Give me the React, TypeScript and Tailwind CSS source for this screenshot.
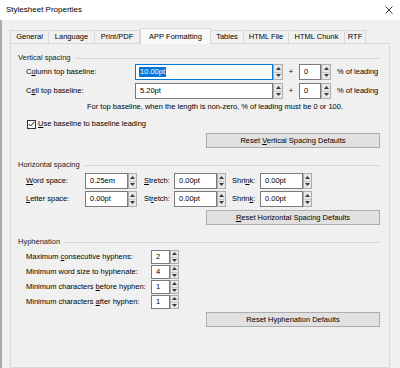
import React from "react";

function Spin({ w = 10 }: { w?: number }) {
  return (
    <div
      className="flex flex-col self-stretch border border-[#adadad] bg-[#e8e8e8]"
      style={{ width: w }}
    >
      <div className="flex flex-1 items-center justify-center border-b border-[#c8c8c8]">
        <svg width="5" height="3" viewBox="0 0 5 3">
          <path d="M0 3 L2.5 0 L5 3 Z" fill="#3a3a3a" />
        </svg>
      </div>
      <div className="flex flex-1 items-center justify-center">
        <svg width="5" height="3" viewBox="0 0 5 3">
          <path d="M0 0 L5 0 L2.5 3 Z" fill="#3a3a3a" />
        </svg>
      </div>
    </div>
  );
}

function Field({
  w,
  children,
  focused = false,
}: {
  w: number;
  children: React.ReactNode;
  focused?: boolean;
}) {
  return (
    <div
      className={
        focused
          ? "flex items-center self-stretch border border-[#0078d7] bg-white pl-[3px]"
          : "flex items-center self-stretch border border-[#7a7a7a] bg-white pl-[4px]"
      }
      style={{ width: w }}
    >
      {children}
    </div>
  );
}

function U({ children }: { children: React.ReactNode }) {
  return <span className="underline underline-offset-1">{children}</span>;
}

function GroupHeader({ label, className }: { label: string; className: string }) {
  return (
    <div className={"flex h-[10px] items-center " + className}>
      <span className="text-[#1a1a1a]">{label}</span>
      <div className="ml-[4px] h-px flex-1 bg-[#d8d8d8]" />
    </div>
  );
}

function Btn({ children, className }: { children: React.ReactNode; className: string }) {
  return (
    <div
      className={
        "flex h-[15px] w-[174px] items-center justify-center self-end border border-[#adadad] bg-[#e1e1e1] " +
        className
      }
    >
      {children}
    </div>
  );
}

const tabs = [
  { t: "General", w: 39 },
  { t: "Language", w: 47 },
  { t: "Print/PDF", w: 46 },
  { t: "APP Formatting", w: 71, sel: true },
  { t: "Tables", w: 34 },
  { t: "HTML File", w: 46 },
  { t: "HTML Chunk", w: 57 },
  { t: "RTF", w: 22 },
];

export default function App() {
  return (
    <div className="h-[368px] w-[400px] overflow-hidden bg-[#f0f0f0] font-['Liberation_Sans',Arial,sans-serif] text-[7.5px] leading-[10px] text-black">
      {/* title bar */}
      <div className="flex h-[20px] items-center justify-between bg-white pl-[6px] pr-[7px]">
        <span className="text-[8px]">Stylesheet Properties</span>
        <svg width="8" height="8" viewBox="0 0 8 8">
          <path d="M0.5 0.5 L7.5 7.5 M7.5 0.5 L0.5 7.5" stroke="#222" strokeWidth="0.9" />
        </svg>
      </div>

      <div className="flex h-[348px] flex-col border-l-[2px] border-[#ababab] pl-[8px] pt-[8px]">
        {/* tabs */}
        <div className="flex h-[15px] items-end">
          {tabs.map((tab) =>
            tab.sel ? (
              <div
                key={tab.t}
                className="relative z-10 -mb-px flex h-[16px] items-center justify-center border border-b-0 border-[#d9d9d9] bg-[#f9f9f9]"
                style={{ width: tab.w }}
              >
                {tab.t}
              </div>
            ) : (
              <div
                key={tab.t}
                className="flex h-[13px] items-center justify-center border border-b-0 border-[#d9d9d9] bg-[#f0f0f0] -ml-px first:ml-0"
                style={{ width: tab.w }}
              >
                {tab.t}
              </div>
            )
          )}
        </div>

        {/* panel */}
        <div className="flex w-[380px] flex-1 flex-col border border-[#d9d9d9] pl-[7px] pr-[9px]">
          {/* Vertical spacing */}
          <GroupHeader label="Vertical spacing" className="mt-[9px]" />
          <div className="mt-[1px] flex h-[16px] items-center pl-[8px]">
            <div className="w-[109px]">
              C<U>o</U>lumn top baseline:
            </div>
            <Field w={138} focused>
              <span className="bg-[#0078d7] px-[1px] leading-[10px] text-white">10.00pt</span>
            </Field>
            <Spin />
            <div className="w-[16px] text-center">+</div>
            <Field w={22}>0</Field>
            <Spin />
            <div className="ml-[6px]">% of leading</div>
          </div>
          <div className="mt-[3px] flex h-[16px] items-center pl-[8px]">
            <div className="w-[109px]">
              C<U>e</U>ll top baseline:
            </div>
            <Field w={138}>5.20pt</Field>
            <Spin />
            <div className="w-[16px] text-center">+</div>
            <Field w={22}>0</Field>
            <Spin />
            <div className="ml-[6px]">% of leading</div>
          </div>
          <div className="ml-[69px] mt-[3px] h-[10px]">
            For top baseline, when the length is non-zero, % of leading must be 0 or 100.
          </div>
          <div className="mt-[7px] flex h-[10px] items-center pl-[9px]">
            <div className="flex h-[9px] w-[9px] items-center justify-center border border-[#333] bg-white">
              <svg width="7" height="6" viewBox="0 0 7 6">
                <path d="M0.6 3 L2.6 5 L6.4 0.8" stroke="#111" strokeWidth="1" fill="none" />
              </svg>
            </div>
            <span className="ml-[2px]">
              <U>U</U>se baseline to baseline leading
            </span>
          </div>
          <Btn className="mt-[4px]">
            <span>
              Reset <U>V</U>ertical Spacing Defaults
            </span>
          </Btn>

          {/* Horizontal spacing */}
          <GroupHeader label="Horizontal spacing" className="mt-[12px]" />
          <div className="mt-[3px] flex h-[16px] items-center pl-[8px]">
            <div className="w-[59px]">
              <U>W</U>ord space:
            </div>
            <Field w={43}>0.25em</Field>
            <Spin w={9} />
            <div className="ml-[7px] w-[30px]">
              <U>S</U>tretch:
            </div>
            <Field w={43}>0.00pt</Field>
            <Spin w={9} />
            <div className="ml-[6px] w-[28px]">
              Shri<U>n</U>k:
            </div>
            <Field w={43}>0.00pt</Field>
            <Spin w={9} />
          </div>
          <div className="mt-[2px] flex h-[16px] items-center pl-[8px]">
            <div className="w-[59px]">
              <U>L</U>etter space:
            </div>
            <Field w={43}>0.00pt</Field>
            <Spin w={9} />
            <div className="ml-[7px] w-[30px]">
              St<U>r</U>etch:
            </div>
            <Field w={43}>0.00pt</Field>
            <Spin w={9} />
            <div className="ml-[6px] w-[28px]">
              Shrin<U>k</U>:
            </div>
            <Field w={43}>0.00pt</Field>
            <Spin w={9} />
          </div>
          <Btn className="mt-[3px]">
            <span>
              <U>R</U>eset Horizontal Spacing Defaults
            </span>
          </Btn>

          {/* Hyphenation */}
          <GroupHeader label="Hyphenation" className="mt-[12px]" />
          {[
            { l: <>Maximum <U>c</U>onsecutive hyphens:</>, v: "2" },
            { l: <>Minimum word size to hyphenate:</>, v: "4" },
            { l: <>Minimum characters <U>b</U>efore hyphen:</>, v: "1" },
            { l: <>Minimum characters <U>a</U>fter hyphen:</>, v: "1" },
          ].map((r, i) => (
            <div
              key={i}
              className={"flex h-[14px] items-center pl-[8px] " + (i === 0 ? "mt-[3px]" : "mt-[1px]")}
            >
              <div className="w-[125px]">{r.l}</div>
              <Field w={19}>{r.v}</Field>
              <Spin w={9} />
            </div>
          ))}
          <Btn className="mt-[3px]">
            <span>Reset Hyphenation Defaults</span>
          </Btn>
        </div>
      </div>
    </div>
  );
}
